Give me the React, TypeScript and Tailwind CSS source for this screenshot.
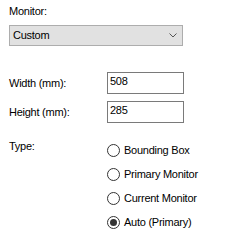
import React from "react";

const options = ["Bounding Box", "Primary Monitor", "Current Monitor", "Auto (Primary)"];

function Radio({ label, checked }: { label: string; checked?: boolean }) {
  return (
    <div className="flex h-[24px] items-center gap-[4px]">
      <span className="flex h-[13px] w-[13px] items-center justify-center rounded-full border border-[#333333] bg-white">
        {checked && <span className="h-[7px] w-[7px] rounded-full bg-[#333333]" />}
      </span>
      <span>{label}</span>
    </div>
  );
}

export default function App() {
  return (
    <div
      className="flex h-[246px] w-[232px] flex-col bg-white pl-[9px] pt-[5px] text-[11px] leading-[13px] tracking-[-0.25px] text-black"
      style={{ fontFamily: '"Liberation Sans", Arial, sans-serif' }}
    >
      <div>Monitor:</div>

      {/* Monitor select */}
      <div className="mt-[7px] flex h-[21px] w-[174px] items-center justify-between border border-[#adadad] bg-[#e1e1e1] pl-[3px] pr-[5px]">
        <span>Custom</span>
        <svg width="8" height="5" viewBox="0 0 8 5" fill="none">
          <polyline points="0.5,0.5 4,4 7.5,0.5" stroke="#555555" strokeWidth="1" />
        </svg>
      </div>

      {/* Size fields */}
      <div className="mt-[26px] flex flex-col gap-[7px]">
        <div className="flex items-center">
          <div className="w-[98px]">Width (mm):</div>
          <div className="h-[22px] w-[77px] border border-[#7a7a7a] bg-white pl-[2px] pt-[2px]">508</div>
        </div>
        <div className="flex items-center">
          <div className="w-[98px]">Height (mm):</div>
          <div className="h-[22px] w-[77px] border border-[#7a7a7a] bg-white pl-[2px] pt-[2px]">285</div>
        </div>
      </div>

      {/* Type */}
      <div className="mt-[15px] flex">
        <div className="w-[98px] pt-[2px]">Type:</div>
        <div className="flex flex-col">
          {options.map((o) => (
            <Radio key={o} label={o} checked={o === "Auto (Primary)"} />
          ))}
        </div>
      </div>
    </div>
  );
}
